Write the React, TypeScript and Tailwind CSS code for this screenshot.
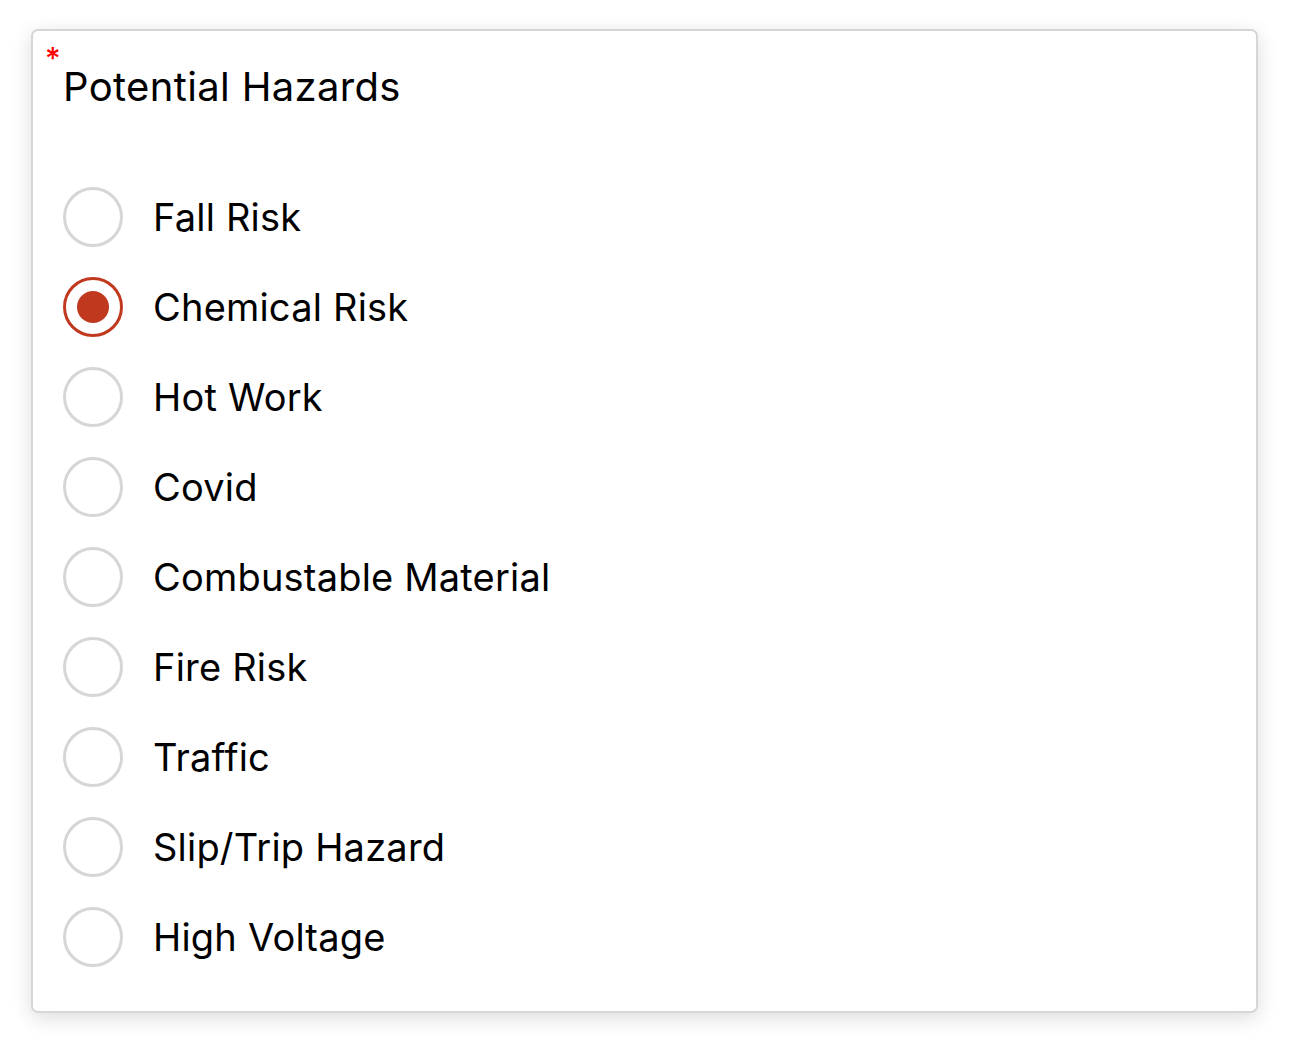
import { useState } from "react";

const HAZARDS = [
  "Fall Risk",
  "Chemical Risk",
  "Hot Work",
  "Covid",
  "Combustable Material",
  "Fire Risk",
  "Traffic",
  "Slip/Trip Hazard",
  "High Voltage",
];

export default function App() {
  const [selected, setSelected] = useState("Chemical Risk");

  return (
    <div className="min-h-screen w-full bg-white px-[31px] pt-[29px]" style={{ fontFamily: "Inter, 'Noto Sans', sans-serif" }}>
      <div className="h-[984px] w-[1227px] rounded-[7px] border-2 border-[#d6d6d6] bg-white shadow-[0_5px_20px_rgba(0,0,0,0.14)]">
        {/* Title */}
        <div className="relative pl-[30px] pt-[30px]">
          <span className="absolute left-[12px] top-[12px] text-[30px] font-medium leading-none text-[#ff0000]">*</span>
          <h1 className="text-[40px] leading-[52px] tracking-[0.35px] text-black">Potential Hazards</h1>
        </div>

        {/* Options */}
        <div className="mt-[59px] flex flex-col pl-[30px]">
          {HAZARDS.map((h) => {
            const active = selected === h;
            return (
              <label key={h} className="flex h-[90px] cursor-pointer items-center gap-[30px]" onClick={() => setSelected(h)}>
                <span
                  className={
                    active
                      ? "flex h-[60px] w-[60px] items-center justify-center rounded-full border-[3px] border-[#c0391f]"
                      : "flex h-[60px] w-[60px] items-center justify-center rounded-full border-[3px] border-[#d6d6d6]"
                  }
                >
                  {active && <span className="h-[32px] w-[32px] rounded-full bg-[#c0391f]" />}
                </span>
                <span className="text-[38px] leading-none tracking-[0.2px] text-black">{h}</span>
              </label>
            );
          })}
        </div>
      </div>
    </div>
  );
}
